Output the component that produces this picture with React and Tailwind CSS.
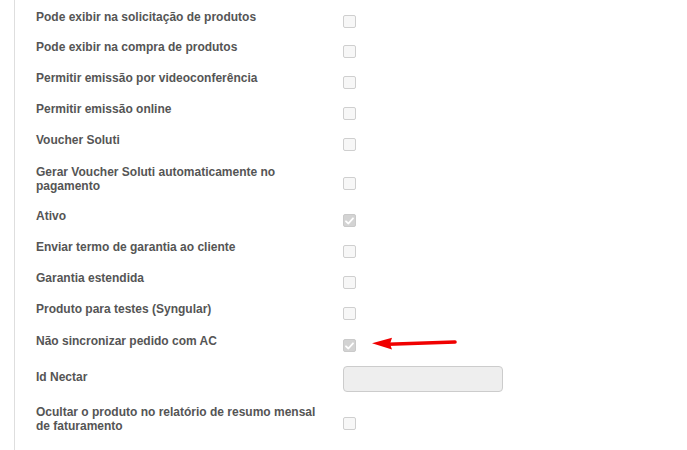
const rows = [
  { label: "Pode exibir na solicitação de produtos", h: "h-[30px]" },
  { label: "Pode exibir na compra de produtos", h: "h-[31px]" },
  { label: "Permitir emissão por videoconferência", h: "h-[31px]" },
  { label: "Permitir emissão online", h: "h-[31px]" },
  { label: "Voucher Soluti", h: "h-[32px]" },
  { label: "Gerar Voucher Soluti automaticamente no pagamento", h: "h-[44px]", twoLines: true },
  { label: "Ativo", h: "h-[31px]", checked: true },
  { label: "Enviar termo de garantia ao cliente", h: "h-[31px]" },
  { label: "Garantia estendida", h: "h-[31px]" },
  { label: "Produto para testes (Syngular)", h: "h-[32px]" },
  { label: "Não sincronizar pedido com AC", h: "h-[32px]", checked: true, arrow: true },
  { label: "Id Nectar", h: "h-[39px]", input: true },
  { label: "Ocultar o produto no relatório de resumo mensal de faturamento", h: "h-[45px]", twoLines: true },
];

function Checkbox({ checked, twoLines }) {
  return (
    <div
      className={
        "w-[13px] h-[13px] rounded-[2px] border flex items-center justify-center " +
        (twoLines ? "mt-[12px] " : "mt-[5px] ") +
        (checked ? "bg-[#d3d3d3] border-[#cacaca]" : "bg-[#f7f7f7] border-[#cfcfcf]")
      }
    >
      {checked && (
        <svg width="9" height="8" viewBox="0 0 9 8">
          <path d="M1 4.3 L3.4 6.5 L8 1.3" fill="none" stroke="#fff" strokeWidth="1.8" strokeLinecap="round" strokeLinejoin="round" />
        </svg>
      )}
    </div>
  );
}

function Arrow() {
  return (
    <svg className="absolute left-[370px] top-[334px]" width="90" height="18" viewBox="0 0 90 18">
      <line x1="18" y1="10.3" x2="85" y2="8" stroke="#f00000" strokeWidth="3.6" strokeLinecap="round" />
      <path d="M2 9.3 L22 3.8 L20 10 L22 15.6 Z" fill="#f00000" />
    </svg>
  );
}

export default function App() {
  return (
    <div className="relative w-[687px] h-[450px] overflow-hidden bg-white" style={{ fontFamily: '"Liberation Sans", Arial, sans-serif' }}>
      <div className="ml-[14px] h-full border-l border-[#dedede] pl-[21px] pt-[10px]">
        {rows.map((r) => (
          <div key={r.label} className={"flex items-start " + r.h}>
            <label className={"w-[290px] text-[12px] leading-[14px] font-bold text-[#555] " + (r.input ? "pt-[4px]" : "")}>
              {r.label}
            </label>
            <div className="ml-[17px]">
              {r.input ? (
                <div className="w-[160px] h-[26px] rounded-[4px] border border-[#cccccc] bg-[#eeeeee]" />
              ) : (
                <Checkbox checked={r.checked} twoLines={r.twoLines} />
              )}
            </div>
          </div>
        ))}
      </div>
      <Arrow />
    </div>
  );
}
